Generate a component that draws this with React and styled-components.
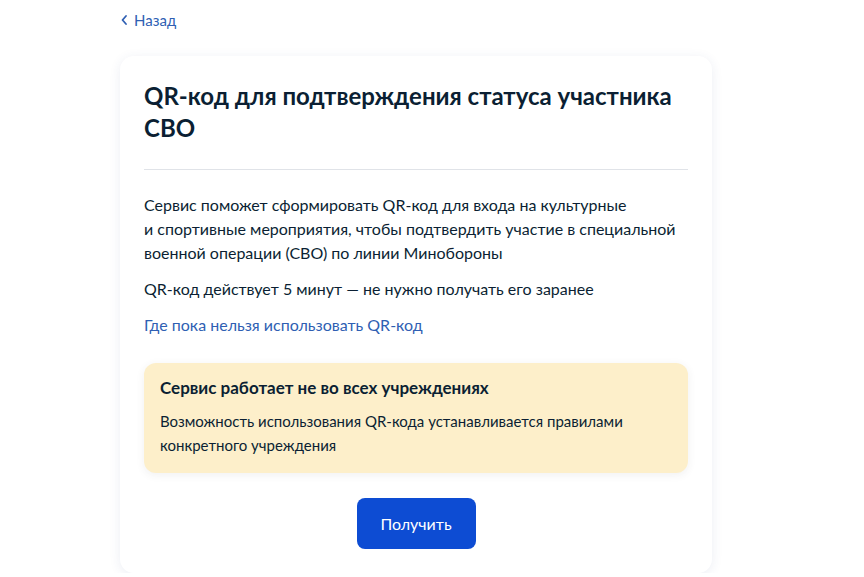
import React from "react";
import styled, { createGlobalStyle } from "styled-components";

const GlobalStyle = createGlobalStyle`
  * { box-sizing: border-box; }
  html, body { margin: 0; padding: 0; background: #ffffff; }
  body {
    font-family: Lato, "Noto Sans", "Liberation Sans", sans-serif;
    color: #0b1f33;
    -webkit-font-smoothing: antialiased;
  }
`;

const Page = styled.div`
  width: 864px;
  padding: 10px 0 0 120px;
`;

const Back = styled.a`
  display: inline-flex;
  align-items: center;
  gap: 6px;
  height: 20px;
  font-size: 15px;
  color: #2f5fb3;
  text-decoration: none;
  cursor: pointer;
`;

const Card = styled.div`
  margin-top: 26px;
  width: 592px;
  background: #fff;
  border-radius: 14px;
  box-shadow: 0 2px 12px rgba(40, 70, 130, 0.09);
  padding: 24px 24px 24px;
`;

const Title = styled.h1`
  margin: 0;
  font-size: 24px;
  line-height: 32px;
  font-weight: 700;
  padding-bottom: 25px;
  border-bottom: 1px solid #e0e3e8;
`;

const Text = styled.p`
  margin: ${(p) => (p.$first ? "23px" : "12px")} 0 0;
  font-size: 16px;
  line-height: 24px;
`;

const Link = styled.a`
  display: block;
  margin-top: 12px;
  font-size: 16px;
  line-height: 24px;
  color: #2f5fb3;
  text-decoration: none;
`;

const Warning = styled.div`
  margin-top: 26px;
  background: #fdefca;
  border-radius: 12px;
  padding: 12px 16px 16px;
  box-shadow: 0 2px 8px rgba(60, 60, 60, 0.08);
`;

const WarningTitle = styled.div`
  font-size: 17px;
  line-height: 26px;
  font-weight: 700;
`;

const WarningText = styled.div`
  margin-top: 8px;
  font-size: 15px;
  line-height: 24px;
  width: 510px;
`;

const Actions = styled.div`
  display: flex;
  justify-content: center;
  margin-top: 25px;
`;

const Button = styled.button`
  width: 119px;
  height: 51px;
  border: none;
  border-radius: 8px;
  background: #0d4cd3;
  color: #fff;
  font-family: inherit;
  font-size: 16px;
  cursor: pointer;
`;

const Chevron = () => (
  <svg width="8" height="12" viewBox="0 0 8 12" fill="none">
    <path d="M6 2L2.5 6L6 10" stroke="#2f5fb3" strokeWidth="1.8" strokeLinecap="round" strokeLinejoin="round" />
  </svg>
);

const intro =
  "Сервис поможет сформировать QR-код для входа на культурные " +
  "и\u00a0спортивные мероприятия, чтобы подтвердить участие в\u00a0специальной " +
  "военной операции (СВО) по линии Минобороны";

export default function App() {
  return (
    <Page>
      <GlobalStyle />
      <Back>
        <Chevron />
        Назад
      </Back>
      <Card>
        <Title>QR-код для подтверждения статуса участника СВО</Title>
        <Text $first>{intro}</Text>
        <Text>QR-код действует 5 минут — не нужно получать его заранее</Text>
        <Link>Где пока нельзя использовать QR-код</Link>
        <Warning>
          <WarningTitle>Сервис работает не во всех учреждениях</WarningTitle>
          <WarningText>
            Возможность использования QR-кода устанавливается правилами
            конкретного учреждения
          </WarningText>
        </Warning>
        <Actions>
          <Button>Получить</Button>
        </Actions>
      </Card>
    </Page>
  );
}
